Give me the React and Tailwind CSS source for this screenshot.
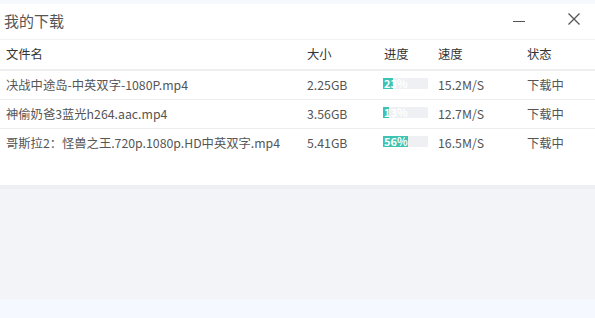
const ROWS = [
  { name: "决战中途岛-中英双字-1080P.mp4", size: "2.25GB", pct: 23, speed: "15.2M/S" },
  { name: "神偷奶爸3蓝光h264.aac.mp4", size: "3.56GB", pct: 13, speed: "12.7M/S" },
  { name: "哥斯拉2：怪兽之王.720p.1080p.HD中英双字.mp4", size: "5.41GB", pct: 56, speed: "16.5M/S" },
];

function Progress({ pct }) {
  return (
    <div className="relative w-[45px] h-[11px] bg-[#eef0f3] overflow-hidden">
      <div className="absolute left-0 top-0 h-full text-[11px] leading-[11px] font-bold text-white pl-[1px] whitespace-nowrap">
        {pct}%
      </div>
      <div
        className="absolute left-0 top-0 h-full bg-[#3cc3b2] overflow-hidden"
        style={{ width: `${pct}%` }}
      >
        <div className="text-[11px] leading-[11px] font-bold text-white pl-[1px] whitespace-nowrap">
          {pct}%
        </div>
      </div>
    </div>
  );
}

export default function App() {
  return (
    <div
      className="w-[595px] h-[318px] flex flex-col bg-[#f5f8fd] text-[#444]"
      style={{ fontFamily: '"Noto Sans CJK SC", "Noto Sans", sans-serif' }}
    >
      <div className="h-[4px]" />
      <div className="bg-white">
        {/* Title bar */}
        <div className="h-[36px] flex items-center border-b border-[#f2f2f2] pl-[4px]">
          <span className="text-[15px] text-[#555] flex-1">我的下载</span>
          <div className="w-[12px] h-[1.5px] bg-[#555] mr-[42px]" />
          <svg width="14" height="14" viewBox="0 0 14 14" className="mr-[14px] mb-[6px]">
            <path d="M1.5 1.5 L12.5 12.5 M12.5 1.5 L1.5 12.5" stroke="#555" strokeWidth="1.3" />
          </svg>
        </div>

        {/* Table header */}
        <div className="h-[31px] flex items-center text-[12.3px] text-[#333] border-b-2 border-[#eeeeee]">
          <div className="w-[307px] pl-[6px]">文件名</div>
          <div className="w-[77px]">大小</div>
          <div className="w-[54px]">进度</div>
          <div className="w-[89px]">速度</div>
          <div className="flex-1">状态</div>
        </div>

        {/* Rows */}
        {ROWS.map((r, i) => (
          <div
            key={r.name}
            className={`h-[29px] flex items-center text-[12.3px] text-[#555] ${i < ROWS.length - 1 ? "border-b border-[#ededed]" : ""}`}
          >
            <div className="w-[307px] pl-[6px] whitespace-nowrap">{r.name}</div>
            <div className="w-[77px]">{r.size}</div>
            <div className="w-[54px] flex items-center">
              <div className="-ml-[1px] mb-[4px]">
                <Progress pct={r.pct} />
              </div>
            </div>
            <div className="w-[89px]">{r.speed}</div>
            <div className="flex-1">下载中</div>
          </div>
        ))}
        <div className="h-[27px]" />
      </div>
      <div className="h-[4px] bg-[#eeeff2]" />
      <div className="h-[110px] bg-[#f3f4f7]" />
      <div className="flex-1 bg-[#f5f8fe]" />
    </div>
  );
}
